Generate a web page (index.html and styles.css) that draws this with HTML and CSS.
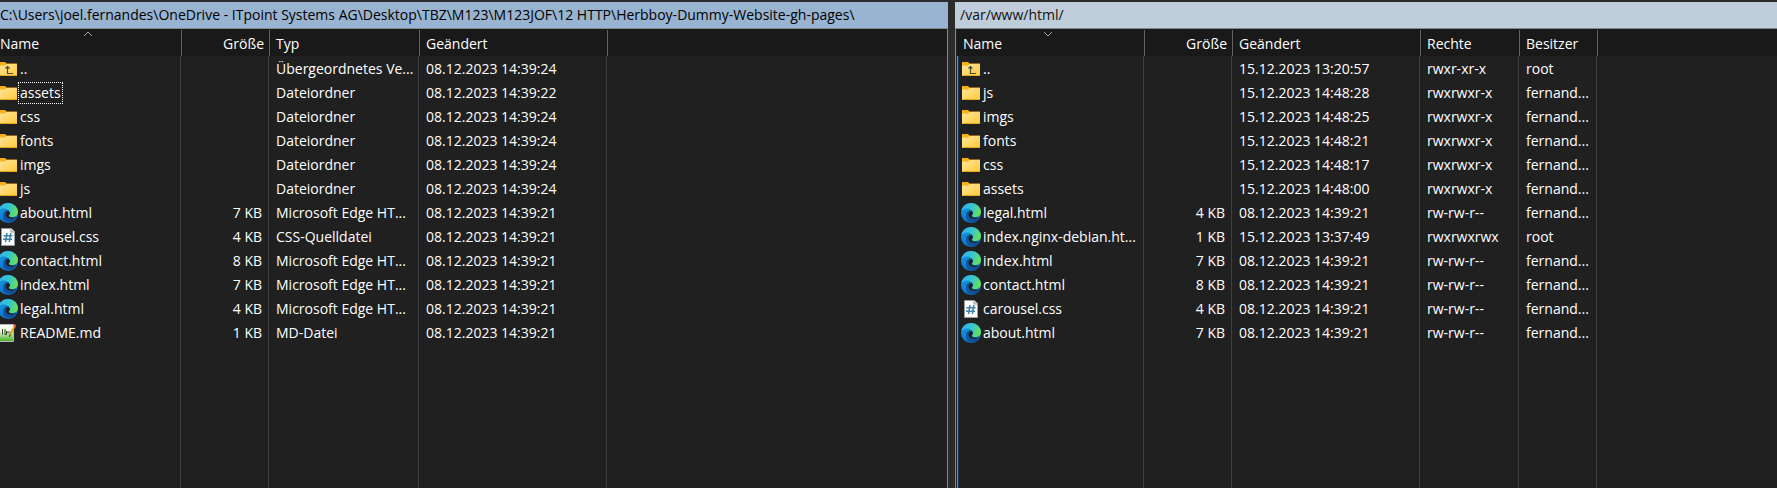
FILE: index.html
```html
<!DOCTYPE html>
<html lang="de">
<head>
<meta charset="utf-8">
<title>Dateimanager</title>
<link rel="stylesheet" href="styles.css">
</head>
<body>
<svg class="sprite" aria-hidden="true">
  <defs>
    <linearGradient id="folder-fill" x1="0" y1="0" x2="1" y2="1"><stop offset="0" stop-color="#ffe69a"/><stop offset="1" stop-color="#ffc93c"/></linearGradient>
    <linearGradient id="edge-top" x1="0" y1="0.3" x2="1" y2="0.6"><stop offset="0" stop-color="#2fb4ea"/><stop offset="0.5" stop-color="#35c5cf"/><stop offset="1" stop-color="#6be251"/></linearGradient>
    <linearGradient id="edge-left" x1="0" y1="0" x2="0.6" y2="1"><stop offset="0" stop-color="#1a9be2"/><stop offset="1" stop-color="#0b6fd0"/></linearGradient>
    <linearGradient id="md-fill" x1="0" y1="0" x2="0" y2="1"><stop offset="0" stop-color="#ffffff"/><stop offset="0.4" stop-color="#e4f5d8"/><stop offset="1" stop-color="#3fae1e"/></linearGradient>
    <symbol id="folder" viewBox="0 0 20 20">
      <path d="M1 3h6l1.500 1.500H19v5H1z" fill="#f7b116"/>
      <path d="M1 6.500h6L8.500 5H19v12H1z" fill="url(#folder-fill)"/>
      <path d="M1 16.500h18" stroke="#e9a820"/>
    </symbol>
    <symbol id="up" viewBox="0 0 20 20">
      <use href="#folder"/>
      <path d="M9.500 8v6.500H15M7.500 9.500l2-2 2 2" fill="none" stroke="#4b4a3c" stroke-width="1.200"/>
    </symbol>
    <symbol id="edge" viewBox="0 0 20 20">
      <circle cx="10" cy="10" r="10" fill="url(#edge-left)"/>
      <path d="M6 9.500C4.500 15 9 18.500 14 17.500c2-.4 3.500-1.300 4.600-2.500A10 10 0 0 1 9 20C5 17.500 3.500 13 6 9.500z" fill="#0c59a4"/>
      <path d="M8.500 8.500C7 12 9.500 15.500 13.500 15.800c2 .1 4-.4 5.200-1.200-2 3.400-6 4.500-9 3C6 15.800 5 11 8.500 8.500z" fill="#124b92"/>
      <path d="M.2 8.500C1 3.500 5 0 10 0c6 0 10 4.500 10 8.800 0 3.400-2.700 5.400-5.700 5.400-2.500 0-3.800-.9-3.500-1.700.8-.8 1.200-1.600 1-2.700C11.400 7 8.500 5.300 5.300 5.500 3 5.700 1.300 6.800.2 8.500z" fill="url(#edge-top)"/>
      <path d="M11.800 9.800c-.3-1.300-1.200-2-2-2.200-1.700 1.200-2.600 3-2 5 .7 1.800 2.800 3.200 5 3.200 2.400.1 4.300-.4 5.600-1.300-2.500.2-8 .2-7.600-2 .8-.8 1.200-1.700 1-2.700z" fill="#202020"/>
      <path d="M9.600 7.500C7 9 6.500 12 8 14.200c1.500 2.300 5 3.200 8 2.400-5 2-10-.5-10.600-4.300C5 9.500 7 7.500 9.600 7.500z" fill="#0e559e"/>
    </symbol>
    <symbol id="css" viewBox="0 0 20 20">
      <path d="M3.500 1.500h10L16.500 4.500v14h-13z" fill="#fafafa" stroke="#9b9b9b"/>
      <path d="M13 1.500v3.500h3.500" fill="#ddd" stroke="#9b9b9b"/>
      <path d="M9 6L7.500 15M12.800 6l-1.500 9M5.500 8.800h9M5 12.200h9" stroke="#3b82a6" stroke-width="1.500"/>
    </symbol>
    <symbol id="md" viewBox="0 0 20 20">
      <path d="M0 1.500h15.500v17H0z" fill="url(#md-fill)" stroke="#b9b9b9"/>
      <path d="M4.500 6v5.500M7 6v5.500h1.500V8M10 8v2.500M12 8.500V10" fill="none" stroke="#39462f"/>
      <path d="M17 2.500l-5 9.500" stroke="#e7a21c" stroke-width="2"/>
      <path d="M16.400 3.500L17.500 1.500" stroke="#db5548" stroke-width="2"/>
      <path d="M12.300 11.500l-1 2.200" stroke="#4a3516" stroke-width="1.200"/>
    </symbol>
  </defs>
</svg>
<main class="commander">
  <section class="pane pane-local" aria-label="Lokal">
    <div class="path">C:\Users\joel.fernandes\OneDrive - ITpoint Systems AG\Desktop\TBZ\M123\M123JOF\12 HTTP\Herbboy-Dummy-Website-gh-pages\</div>
    <div class="list">
      <table class="files">
        <colgroup><col class="c-name-local"><col class="c-size"><col class="c-type"><col class="c-date"><col></colgroup>
        <thead><tr>
          <th><button>Name<svg class="sort" viewBox="0 0 10 6"><path d="M1 5l4-4 4 4"/></svg></button></th>
          <th class="size"><button>Größe</button></th><th><button>Typ</button></th><th><button>Geändert</button></th><th></th>
        </tr></thead>
        <tbody>
          <tr><td><span class="file"><svg><use href="#up"/></svg><span>..</span></span></td><td></td><td>Übergeordnetes Ve...</td><td>08.12.2023 14:39:24</td><td></td></tr>
          <tr><td><span class="file"><svg><use href="#folder"/></svg><span class="focused">assets</span></span></td><td></td><td>Dateiordner</td><td>08.12.2023 14:39:22</td><td></td></tr>
          <tr><td><span class="file"><svg><use href="#folder"/></svg><span>css</span></span></td><td></td><td>Dateiordner</td><td>08.12.2023 14:39:24</td><td></td></tr>
          <tr><td><span class="file"><svg><use href="#folder"/></svg><span>fonts</span></span></td><td></td><td>Dateiordner</td><td>08.12.2023 14:39:24</td><td></td></tr>
          <tr><td><span class="file"><svg><use href="#folder"/></svg><span>imgs</span></span></td><td></td><td>Dateiordner</td><td>08.12.2023 14:39:24</td><td></td></tr>
          <tr><td><span class="file"><svg><use href="#folder"/></svg><span>js</span></span></td><td></td><td>Dateiordner</td><td>08.12.2023 14:39:24</td><td></td></tr>
          <tr><td><span class="file"><svg><use href="#edge"/></svg><span>about.html</span></span></td><td class="size">7 KB</td><td>Microsoft Edge HT...</td><td>08.12.2023 14:39:21</td><td></td></tr>
          <tr><td><span class="file"><svg><use href="#css"/></svg><span>carousel.css</span></span></td><td class="size">4 KB</td><td>CSS-Quelldatei</td><td>08.12.2023 14:39:21</td><td></td></tr>
          <tr><td><span class="file"><svg><use href="#edge"/></svg><span>contact.html</span></span></td><td class="size">8 KB</td><td>Microsoft Edge HT...</td><td>08.12.2023 14:39:21</td><td></td></tr>
          <tr><td><span class="file"><svg><use href="#edge"/></svg><span>index.html</span></span></td><td class="size">7 KB</td><td>Microsoft Edge HT...</td><td>08.12.2023 14:39:21</td><td></td></tr>
          <tr><td><span class="file"><svg><use href="#edge"/></svg><span>legal.html</span></span></td><td class="size">4 KB</td><td>Microsoft Edge HT...</td><td>08.12.2023 14:39:21</td><td></td></tr>
          <tr><td><span class="file"><svg><use href="#md"/></svg><span>README.md</span></span></td><td class="size">1 KB</td><td>MD-Datei</td><td>08.12.2023 14:39:21</td><td></td></tr>
          <tr class="rest"><td></td><td></td><td></td><td></td><td></td></tr>
        </tbody>
      </table>
    </div>
  </section>
  <section class="pane pane-remote" aria-label="Server">
    <div class="path">/var/www/html/</div>
    <div class="list">
      <table class="files">
        <colgroup><col class="c-name-remote"><col class="c-size"><col class="c-date"><col class="c-rights"><col class="c-owner"><col></colgroup>
        <thead><tr>
          <th><button>Name<svg class="sort" viewBox="0 0 10 6"><path d="M1 1l4 4 4-4"/></svg></button></th>
          <th class="size"><button>Größe</button></th><th><button>Geändert</button></th><th><button>Rechte</button></th><th><button>Besitzer</button></th><th></th>
        </tr></thead>
        <tbody>
          <tr><td><span class="file"><svg><use href="#up"/></svg><span>..</span></span></td><td></td><td>15.12.2023 13:20:57</td><td>rwxr-xr-x</td><td>root</td><td></td></tr>
          <tr><td><span class="file"><svg><use href="#folder"/></svg><span>js</span></span></td><td></td><td>15.12.2023 14:48:28</td><td>rwxrwxr-x</td><td>fernand...</td><td></td></tr>
          <tr><td><span class="file"><svg><use href="#folder"/></svg><span>imgs</span></span></td><td></td><td>15.12.2023 14:48:25</td><td>rwxrwxr-x</td><td>fernand...</td><td></td></tr>
          <tr><td><span class="file"><svg><use href="#folder"/></svg><span>fonts</span></span></td><td></td><td>15.12.2023 14:48:21</td><td>rwxrwxr-x</td><td>fernand...</td><td></td></tr>
          <tr><td><span class="file"><svg><use href="#folder"/></svg><span>css</span></span></td><td></td><td>15.12.2023 14:48:17</td><td>rwxrwxr-x</td><td>fernand...</td><td></td></tr>
          <tr><td><span class="file"><svg><use href="#folder"/></svg><span>assets</span></span></td><td></td><td>15.12.2023 14:48:00</td><td>rwxrwxr-x</td><td>fernand...</td><td></td></tr>
          <tr><td><span class="file"><svg><use href="#edge"/></svg><span>legal.html</span></span></td><td class="size">4 KB</td><td>08.12.2023 14:39:21</td><td>rw-rw-r--</td><td>fernand...</td><td></td></tr>
          <tr><td><span class="file"><svg><use href="#edge"/></svg><span>index.nginx-debian.ht...</span></span></td><td class="size">1 KB</td><td>15.12.2023 13:37:49</td><td>rwxrwxrwx</td><td>root</td><td></td></tr>
          <tr><td><span class="file"><svg><use href="#edge"/></svg><span>index.html</span></span></td><td class="size">7 KB</td><td>08.12.2023 14:39:21</td><td>rw-rw-r--</td><td>fernand...</td><td></td></tr>
          <tr><td><span class="file"><svg><use href="#edge"/></svg><span>contact.html</span></span></td><td class="size">8 KB</td><td>08.12.2023 14:39:21</td><td>rw-rw-r--</td><td>fernand...</td><td></td></tr>
          <tr><td><span class="file"><svg><use href="#css"/></svg><span>carousel.css</span></span></td><td class="size">4 KB</td><td>08.12.2023 14:39:21</td><td>rw-rw-r--</td><td>fernand...</td><td></td></tr>
          <tr><td><span class="file"><svg><use href="#edge"/></svg><span>about.html</span></span></td><td class="size">7 KB</td><td>08.12.2023 14:39:21</td><td>rw-rw-r--</td><td>fernand...</td><td></td></tr>
          <tr class="rest"><td></td><td></td><td></td><td></td><td></td><td></td></tr>
        </tbody>
      </table>
    </div>
  </section>
</main>
</body>
</html>
```
FILE: styles.css
```css
* { box-sizing: border-box; }
body {
  margin: 0;
  background: #2b2b2b;
  color: #fff;
  font: 14px/20px "Segoe UI", "Open Sans", "Noto Sans", sans-serif;
}
.sprite { position: absolute; width: 0; height: 0; }
.commander {
  display: grid;
  grid-template-columns: 948fr 822fr;
  gap: 7px;
  height: 100vh;
  padding-top: 2px;
  overflow: hidden;
}
.pane {
  display: grid;
  grid-template-rows: auto 1fr;
  min-width: 0;
  min-height: 0;
}
.path {
  padding: 3px 5px;
  color: #000;
  white-space: nowrap;
}
.pane-local .path { background: #99b4d1; padding-left: 0; }
.pane-remote .path { background: #bfcddb; color: #111; }
.list {
  border-top: 1px solid #828790;
  background: #202020;
  overflow: hidden;
}
.pane-local .list { border-right: 1px solid #828790; }
.pane-remote .list { border-left: 1px solid #828790; }
.files {
  width: 100%;
  height: 100%;
  table-layout: fixed;
  border-collapse: separate;
  border-spacing: 0;
}
.c-name-local { width: 182px; }
.c-name-remote { width: 188px; }
.c-size { width: 88px; }
.c-type { width: 150px; }
.c-date { width: 188px; }
.c-rights { width: 99px; }
.c-owner { width: 78px; }
th {
  position: relative;
  height: 27px;
  padding: 0;
  background: linear-gradient(#636363, #636363) right bottom / 1px 26px no-repeat #191919;
  font-weight: 400;
}
th:last-child { background: #191919; }
th button {
  display: block;
  width: 100%;
  padding: 3px 6px 0;
  border: 0;
  background: none;
  color: inherit;
  font: inherit;
  line-height: 24px;
  text-align: left;
}
.pane-local th:first-child button { padding-left: 0; }
.size, th.size button { text-align: right; }
.sort {
  position: absolute;
  top: 2px;
  left: 50%;
  width: 10px;
  height: 6px;
  margin-left: -8px;
  fill: none;
  stroke: #a0a0a0;
}
td {
  height: 24px;
  padding: 2px 8px 0 6px;
  background: linear-gradient(#3b3f46, #3b3f46) right 1px top / 1px 100% no-repeat;
  white-space: nowrap;
}
td:last-child { background: none; }
td:first-child { padding: 2px 0 0 3px; }
.pane-local td:first-child { padding-left: 0; }
.pane-remote td:first-child { border-left: 1px solid #828790; box-shadow: inset 1px 0 #17375e; }
.pane-remote .files { padding-left: 1px; }
.rest td { height: auto; }
.file { display: flex; align-items: center; }
.file svg { flex: none; width: 20px; height: 20px; }
.file span { padding: 0 1px; margin-left: 1px; }
.pane-local .file { margin-left: -2px; }
.file .focused { outline: 1px dotted #fff; }
```
